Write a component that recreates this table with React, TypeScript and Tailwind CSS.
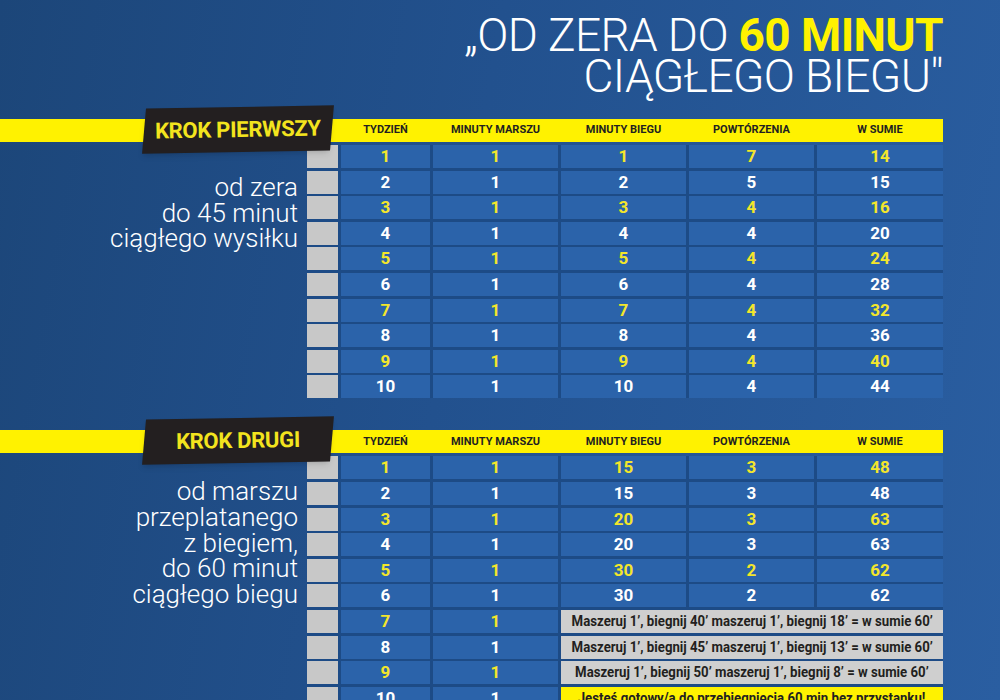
const cols =
	"grid grid-cols-[31px_89px_125px_125px_125px_126px] gap-x-[3px]";

type Row = {
	w: string;
	m: string;
	run?: string;
	rep?: string;
	sum?: string;
	note?: string;
	final?: boolean;
};

const krokPierwszy: Row[] = [
	{ w: "1", m: "1", run: "1", rep: "7", sum: "14" },
	{ w: "2", m: "1", run: "2", rep: "5", sum: "15" },
	{ w: "3", m: "1", run: "3", rep: "4", sum: "16" },
	{ w: "4", m: "1", run: "4", rep: "4", sum: "20" },
	{ w: "5", m: "1", run: "5", rep: "4", sum: "24" },
	{ w: "6", m: "1", run: "6", rep: "4", sum: "28" },
	{ w: "7", m: "1", run: "7", rep: "4", sum: "32" },
	{ w: "8", m: "1", run: "8", rep: "4", sum: "36" },
	{ w: "9", m: "1", run: "9", rep: "4", sum: "40" },
	{ w: "10", m: "1", run: "10", rep: "4", sum: "44" },
];

const krokDrugi: Row[] = [
	{ w: "1", m: "1", run: "15", rep: "3", sum: "48" },
	{ w: "2", m: "1", run: "15", rep: "3", sum: "48" },
	{ w: "3", m: "1", run: "20", rep: "3", sum: "63" },
	{ w: "4", m: "1", run: "20", rep: "3", sum: "63" },
	{ w: "5", m: "1", run: "30", rep: "2", sum: "62" },
	{ w: "6", m: "1", run: "30", rep: "2", sum: "62" },
	{ w: "7", m: "1", note: "Maszeruj 1’, biegnij 40’ maszeruj 1’, biegnij 18’ = w sumie 60’" },
	{ w: "8", m: "1", note: "Maszeruj 1’, biegnij 45’ maszeruj 1’, biegnij 13’ = w sumie 60’" },
	{ w: "9", m: "1", note: "Maszeruj 1’, biegnij 50’ maszeruj 1’, biegnij 8’ = w sumie 60’" },
	{ w: "10", m: "1", note: "Jesteś gotowy/a do przebiegnięcia 60 min bez przystanku!", final: true },
];

const headers = ["TYDZIEŃ", "MINUTY MARSZU", "MINUTY BIEGU", "POWTÓRZENIA", "W SUMIE"];

function Cell({ children, odd }: { children: React.ReactNode; odd: boolean }) {
	return (
		<div
			className={`flex items-center justify-center bg-[#2b63aa] font-['Roboto',sans-serif] font-bold text-[17px] leading-none ${
				odd ? "text-[#f3e62b]" : "text-white"
			}`}>
			{children}
		</div>
	);
}

function Section({
	label,
	lines,
	rows,
	textTop,
}: {
	label: string;
	lines: string[];
	rows: Row[];
	textTop: string;
}) {
	return (
		<div className="relative">
			{/* yellow header bar */}
			<div className="flex w-[943px] h-[23px] bg-[#fff200]">
				<div className="w-[310px]" />
				<div className={`${cols} flex-1 -ml-[3px]`}>
					<div />
					{headers.map((h) => (
						<div
							key={h}
							className="flex items-center justify-center font-['Roboto',sans-serif] font-bold text-[11px] text-[#231f20]">
							{h}
						</div>
					))}
				</div>
			</div>
			<div className="absolute left-[144px] top-[-12px] w-[188px] h-[45px] bg-[#231f20] -skew-x-6 -rotate-1 flex items-center justify-center shadow-md">
				<span className="skew-x-6 font-['Roboto',sans-serif] font-bold text-[22px] text-[#f3e41e] tracking-[-0.3px]">
					{label}
				</span>
			</div>

			<div className="flex mt-[3px]">
				<div
					className={`w-[307px] pr-[9px] text-right text-white font-['Roboto',sans-serif] font-light text-[26px] leading-[25.6px] ${textTop}`}>
					{lines.map((l) => (
						<div key={l}>{l}</div>
					))}
				</div>
				<div className="flex flex-col gap-y-[2.6px] bg-[#1d4b86]">
					{rows.map((r, i) => {
						const odd = i % 2 === 0;
						return (
							<div key={r.w} className={`${cols} h-[23px]`}>
								<div className="bg-[#c8c8c8]" />
								<Cell odd={odd}>{r.w}</Cell>
								<Cell odd={odd}>{r.m}</Cell>
								{r.note ? (
									<div
										className={`col-span-3 flex items-center justify-center overflow-hidden ${
											r.final ? "bg-[#fff200]" : "bg-[#cfcfcf]"
										}`}>
										<span className="whitespace-nowrap scale-x-[0.88] font-['Roboto',sans-serif] font-bold text-[15px] text-[#231f20]">
											{r.note}
										</span>
									</div>
								) : (
									<>
										<Cell odd={odd}>{r.run}</Cell>
										<Cell odd={odd}>{r.rep}</Cell>
										<Cell odd={odd}>{r.sum}</Cell>
									</>
								)}
							</div>
						);
					})}
				</div>
			</div>
		</div>
	);
}

export default function App() {
	return (
		<div className="w-[1000px] h-[700px] overflow-hidden bg-[linear-gradient(100deg,#1c4679_0%,#22518e_45%,#2a5ea1_100%)]">
			<div className="pt-[15px] pr-[57px] text-right text-white font-['Roboto',sans-serif] font-light text-[46px] leading-[41px] tracking-[-0.6px]">
				<div>
					„OD ZERA DO <span className="font-bold text-[#fff200]">60 MINUT</span>
				</div>
				<div>CIĄGŁEGO BIEGU"</div>
			</div>
			<div className="mt-[22px]">
				<Section
					label="KROK PIERWSZY"
					lines={["od zera", "do 45 minut", "ciągłego wysiłku"]}
					rows={krokPierwszy}
					textTop="pt-[30px]"
				/>
			</div>
			<div className="mt-[32px]">
				<Section
					label="KROK DRUGI"
					lines={["od marszu", "przeplatanego", "z biegiem,", "do 60 minut", "ciągłego biegu"]}
					rows={krokDrugi}
					textTop="pt-[23px]"
				/>
			</div>
		</div>
	);
}
